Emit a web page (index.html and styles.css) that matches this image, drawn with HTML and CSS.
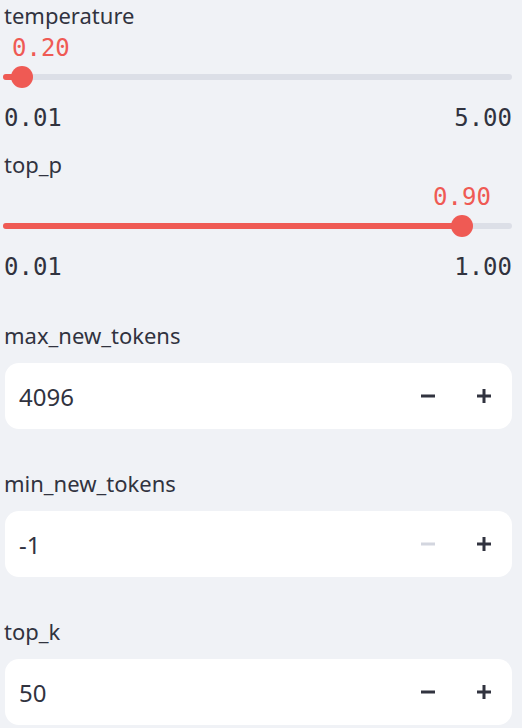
FILE: index.html
```html
<!DOCTYPE html>
<html>
<head>
<meta charset="utf-8">
<link rel="stylesheet" href="styles.css">
</head>
<body>
<div class="panel">
  <div class="slider">
    <div class="label">temperature</div>
    <div class="value-row"><span class="value" style="left: 8px">0.20</span></div>
    <div class="track-row">
      <div class="track">
        <div class="fill" style="width: 19px"></div>
        <div class="thumb" style="left: 19px"></div>
      </div>
    </div>
    <div class="range"><span>0.01</span><span>5.00</span></div>
  </div>
  <div class="slider">
    <div class="label">top_p</div>
    <div class="value-row"><span class="value center" style="left: 458px">0.90</span></div>
    <div class="track-row">
      <div class="track">
        <div class="fill" style="width: 459px"></div>
        <div class="thumb" style="left: 459px"></div>
      </div>
    </div>
    <div class="range"><span>0.01</span><span>1.00</span></div>
  </div>

  <div class="numbers">
    <div class="number">
      <div class="label">max_new_tokens</div>
      <div class="box">
        <span class="num">4096</span>
        <button class="step"><svg width="14" height="14" viewBox="0 0 14 14"><rect x="0" y="5.5" width="14" height="3" fill="currentColor"/></svg></button>
        <button class="step"><svg width="14" height="14" viewBox="0 0 14 14"><rect x="0" y="5.5" width="14" height="3" fill="currentColor"/><rect x="5.5" y="0" width="3" height="14" fill="currentColor"/></svg></button>
      </div>
    </div>
    <div class="number">
      <div class="label">min_new_tokens</div>
      <div class="box">
        <span class="num">-1</span>
        <button class="step disabled"><svg width="14" height="14" viewBox="0 0 14 14"><rect x="0" y="5.5" width="14" height="3" fill="currentColor"/></svg></button>
        <button class="step"><svg width="14" height="14" viewBox="0 0 14 14"><rect x="0" y="5.5" width="14" height="3" fill="currentColor"/><rect x="5.5" y="0" width="3" height="14" fill="currentColor"/></svg></button>
      </div>
    </div>
    <div class="number">
      <div class="label">top_k</div>
      <div class="box">
        <span class="num">50</span>
        <button class="step"><svg width="14" height="14" viewBox="0 0 14 14"><rect x="0" y="5.5" width="14" height="3" fill="currentColor"/></svg></button>
        <button class="step"><svg width="14" height="14" viewBox="0 0 14 14"><rect x="0" y="5.5" width="14" height="3" fill="currentColor"/><rect x="5.5" y="0" width="3" height="14" fill="currentColor"/></svg></button>
      </div>
    </div>
  </div>
</div>
</body>
</html>
```

FILE: styles.css
```css
html, body {
  margin: 0;
  padding: 0;
  background: #f0f2f6;
}
body {
  font-family: "Noto Sans", "Open Sans", sans-serif;
  color: #31333f;
}
.panel {
  padding: 0 10px 0 4px;
  display: flex;
  flex-direction: column;
}
.slider {
  height: 149px;
  display: flex;
  flex-direction: column;
}
.label {
  height: 30px;
  line-height: 30px;
  font-size: 22px;
  color: #31333f;
}
.value-row {
  position: relative;
  height: 36px;
}
.value {
  position: absolute;
  top: 0;
  line-height: 36px;
  font-family: "DejaVu Sans Mono", "Liberation Mono", monospace;
  font-size: 24px;
  color: #ef5a54;
}
.value.center {
  transform: translateX(-50%);
}
.track-row {
  height: 22px;
  display: flex;
  align-items: center;
}
.track {
  position: relative;
  flex: 1;
  height: 6px;
  margin-left: -1px;
  border-radius: 3px;
  background: #dcdfe7;
}
.fill {
  height: 6px;
  border-radius: 3px;
  background: #ef5a54;
}
.thumb {
  position: absolute;
  top: -8px;
  width: 22px;
  height: 22px;
  margin-left: -11px;
  border-radius: 50%;
  background: #ef5a54;
}
.range {
  height: 61px;
  line-height: 61px;
  display: flex;
  justify-content: space-between;
  font-family: "DejaVu Sans Mono", "Liberation Mono", monospace;
  font-size: 24px;
  color: #31333f;
}
.numbers {
  margin-top: 22px;
  display: flex;
  flex-direction: column;
  gap: 39px;
}
.number {
  display: flex;
  flex-direction: column;
  gap: 13px;
}
.box {
  height: 66px;
  margin-left: 1px;
  border-radius: 14px;
  background: #ffffff;
  display: flex;
  align-items: center;
  padding-left: 14px;
}
.num {
  flex: 1;
  font-size: 24px;
  color: #31333f;
}
.step {
  width: 56px;
  height: 66px;
  border: 0;
  padding: 0;
  background: transparent;
  color: #31333f;
  display: flex;
  align-items: center;
  justify-content: center;
}
.step.disabled {
  color: #d3d6df;
}
```
